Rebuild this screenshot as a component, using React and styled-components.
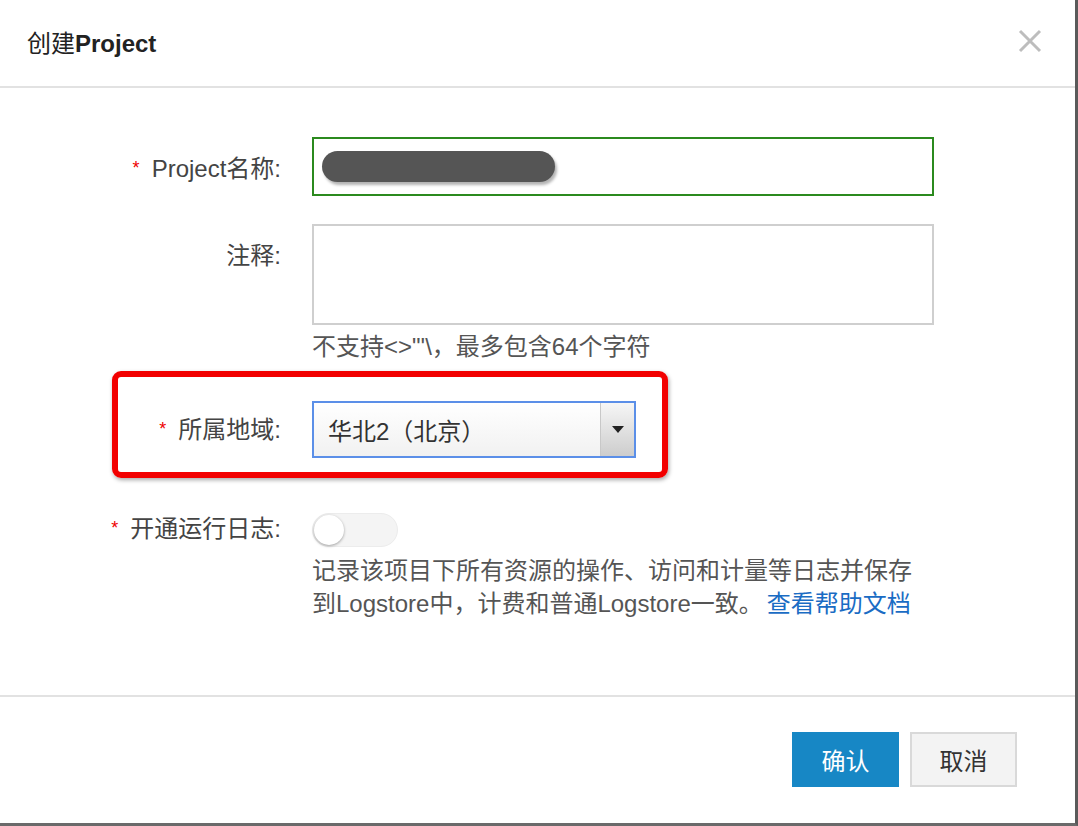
import React from 'react'
import styled, { createGlobalStyle } from 'styled-components'

const GlobalStyle = createGlobalStyle`
  html, body {
    margin: 0;
    padding: 0;
    background: #fff;
  }
  body {
    font-family: "Liberation Sans", "Noto Sans CJK SC", sans-serif;
  }
`

const Dialog = styled.div`
  width: 1078px;
  height: 826px;
  box-sizing: border-box;
  background: #fff;
  border-right: 3px solid #5a5a5a;
  border-bottom: 3px solid #6a6a6a;
  display: flex;
  flex-direction: column;
`

const Header = styled.div`
  height: 88px;
  flex-shrink: 0;
  box-sizing: border-box;
  display: flex;
  align-items: center;
  justify-content: space-between;
  padding: 0 30px 4px 27px;
  border-bottom: 2px solid #e2e2e2;
`

const Title = styled.div`
  font-size: 24px;
  color: #222;
  b {
    font-weight: bold;
  }
`

const Close = styled.button`
  border: none;
  background: none;
  padding: 0;
  width: 30px;
  height: 30px;
  display: flex;
  align-items: center;
  justify-content: center;
  cursor: pointer;
`

const Body = styled.div`
  flex: 1;
  padding-top: 49px;
  display: flex;
  flex-direction: column;
`

const Row = styled.div`
  display: flex;
  align-items: ${p => (p.$top ? 'flex-start' : 'center')};
  margin-bottom: ${p => p.$gap || 0}px;
`

const Label = styled.div`
  width: ${p => p.$width || 312}px;
  flex-shrink: 0;
  box-sizing: border-box;
  padding-right: 31px;
  text-align: right;
  font-size: 24px;
  color: #444;
  line-height: ${p => p.$lh || 'normal'};
  padding-top: ${p => p.$pt || 0}px;
  white-space: nowrap;
`

const Star = styled.span`
  color: #e00;
  font-size: 18px;
  margin-right: 12px;
  vertical-align: 3px;
`

const Control = styled.div`
  width: 622px;
  display: flex;
  flex-direction: column;
`

const TextInput = styled.div`
  height: 59px;
  box-sizing: border-box;
  border: 2px solid #2b8a1e;
  display: flex;
  align-items: center;
  padding-left: 8px;
`

const Redacted = styled.div`
  width: 233px;
  height: 31px;
  border-radius: 16px;
  background: #555;
  box-shadow: 2px 3px 3px rgba(0, 0, 0, 0.3);
`

const TextArea = styled.div`
  height: 101px;
  box-sizing: border-box;
  border: 2px solid #cfcfcf;
`

const Hint = styled.div`
  font-size: 24px;
  color: #555;
  line-height: 34px;
  margin-top: 5px;
`

const Highlight = styled.div`
  margin-left: 112px;
  width: 556px;
  height: 107px;
  box-sizing: border-box;
  border: 6px solid #f20000;
  border-radius: 9px;
  box-shadow: 1px 2px 4px rgba(0, 0, 0, 0.35);
  display: flex;
  align-items: flex-start;
  padding-top: 24px;
  margin-top: 7px;
  margin-bottom: 35px;
`

const Select = styled.div`
  width: 324px;
  height: 57px;
  box-sizing: border-box;
  border: 2px solid #5b8fe8;
  display: flex;
  background: linear-gradient(#fff, #f1f1f1);
`

const SelectValue = styled.div`
  flex: 1;
  display: flex;
  align-items: center;
  padding-left: 14px;
  font-size: 24px;
  color: #333;
`

const SelectArrow = styled.div`
  width: 33px;
  border-left: 1px solid #c8c8c8;
  background: linear-gradient(#f6f6f6, #cdcdcd);
  display: flex;
  align-items: center;
  justify-content: center;
  &::after {
    content: '';
    border-left: 6px solid transparent;
    border-right: 6px solid transparent;
    border-top: 7px solid #222;
  }
`

const Toggle = styled.div`
  width: 86px;
  height: 34px;
  box-sizing: border-box;
  border-radius: 17px;
  background: #f4f4f4;
  border: 1px solid #ececec;
  padding: 1px;
`

const Knob = styled.div`
  width: 30px;
  height: 30px;
  border-radius: 50%;
  background: #fff;
  box-shadow: 0 1px 3px rgba(0, 0, 0, 0.35);
`

const Desc = styled.div`
  font-size: 24px;
  color: #555;
  line-height: 33px;
  margin-top: 7px;
  width: 612px;
`

const Link = styled.a`
  color: #1a6cc4;
  text-decoration: none;
  padding-left: 4px;
`

const Footer = styled.div`
  height: 128px;
  flex-shrink: 0;
  box-sizing: border-box;
  border-top: 2px solid #e2e2e2;
  display: flex;
  justify-content: flex-end;
  align-items: flex-start;
  padding: 35px 58px 0 0;
  gap: 11px;
`

const Button = styled.button`
  width: 107px;
  height: 55px;
  box-sizing: border-box;
  font-family: inherit;
  font-size: 24px;
  cursor: pointer;
  border: ${p => (p.$primary ? 'none' : '2px solid #d9d9d9')};
  background: ${p => (p.$primary ? '#1787c5' : '#f3f3f3')};
  color: ${p => (p.$primary ? '#fff' : '#333')};
`

export default function App() {
  return (
    <>
      <GlobalStyle />
      <Dialog>
        <Header>
          <Title>创建<b>Project</b></Title>
          <Close aria-label="close">
            <svg width="24" height="24" viewBox="0 0 24 24">
              <path d="M2 2 L22 22 M22 2 L2 22" stroke="#bdbdbd" strokeWidth="3" />
            </svg>
          </Close>
        </Header>
        <Body>
          <Row $gap={28}>
            <Label><Star>*</Star>Project名称:</Label>
            <Control>
              <TextInput>
                <Redacted />
              </TextInput>
            </Control>
          </Row>
          <Row $top>
            <Label $pt={12}>注释:</Label>
            <Control>
              <TextArea />
              <Hint>不支持&lt;&gt;"'\，最多包含64个字符</Hint>
            </Control>
          </Row>
          <Highlight>
            <Label $width={194} $lh="57px"><Star>*</Star>所属地域:</Label>
            <Select>
              <SelectValue>华北2（北京）</SelectValue>
              <SelectArrow />
            </Select>
          </Highlight>
          <Row $top>
            <Label $lh="30px"><Star>*</Star>开通运行日志:</Label>
            <Control>
              <Toggle>
                <Knob />
              </Toggle>
              <Desc>
                记录该项目下所有资源的操作、访问和计量等日志并保存<br />
                到Logstore中，计费和普通Logstore一致。<Link href="#">查看帮助文档</Link>
              </Desc>
            </Control>
          </Row>
        </Body>
        <Footer>
          <Button $primary>确认</Button>
          <Button>取消</Button>
        </Footer>
      </Dialog>
    </>
  )
}
